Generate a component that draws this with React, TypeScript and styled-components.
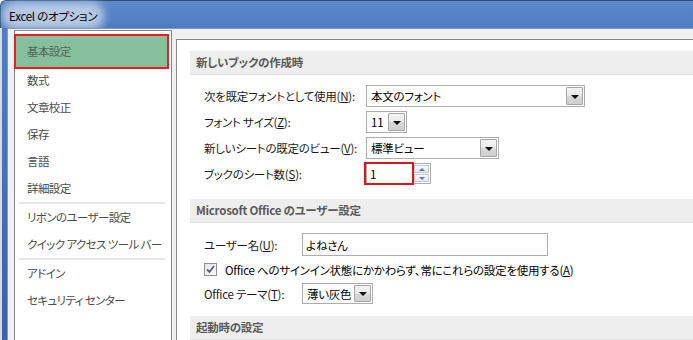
import React from 'react';
import styled, { createGlobalStyle } from 'styled-components';

const GlobalStyle = createGlobalStyle`
  html, body {
    margin: 0;
    padding: 0;
    background: #f0f0f0;
  }
  body {
    font-family: 'Noto Sans CJK JP', 'Noto Sans', sans-serif;
    font-size: 11.5px;
    letter-spacing: -0.25px;
    color: #000;
    font-feature-settings: 'palt';
  }
`;

const Window = styled.div`
  width: 693px;
  height: 340px;
  overflow: hidden;
  display: flex;
  flex-direction: column;
  background: #f0f0f0;
`;

const TitleBar = styled.div`
  height: 28px;
  flex-shrink: 0;
  display: flex;
  align-items: center;
  padding-left: 8px;
  box-sizing: border-box;
  border-top: 1px solid #2f4a70;
  border-left: 1px solid #2f4a70;
  border-top-left-radius: 6px;
  background: linear-gradient(to bottom, #5d8bcb 0%, #5282c5 60%, #4c7bbf 100%);
`;

const TitleText = styled.span`
  font-size: 11.5px;
  line-height: 14px;
  color: #000;
  background: rgba(214, 224, 238, 0.75);
  box-shadow: 0 0 9px 7px rgba(214, 224, 238, 0.75);
  border-radius: 6px;
  margin-top: 2px;
`;

const Frame = styled.div`
  flex: 1;
  display: flex;
  min-height: 0;
`;

const LeftEdge = styled.div`
  width: 5px;
  flex-shrink: 0;
  border-left: 2px solid #d6dbe3;
  background: linear-gradient(to bottom, #4f7fc2, #3a63a6);
`;

const Client = styled.div`
  flex: 1;
  display: flex;
  align-items: flex-start;
  gap: 4px;
  padding: 1px 0 0 6px;
  background: #f0f0f0;
  border-top: 1px solid #8a97a9;
  border-left: 1px solid #8a97a9;
  overflow: hidden;
`;

const Nav = styled.div`
  width: 158px;
  height: 320px;
  flex-shrink: 0;
  box-sizing: border-box;
  border: 1px solid #828790;
  background: #fff;
  padding-top: 3px;
`;

const NavItem = styled.div<{ $active?: boolean }>`
  height: 27px;
  line-height: 27px;
  padding-left: 12px;
  color: #4b4b4b;
  letter-spacing: -0.6px;
  white-space: nowrap;
  ${(p) =>
    p.$active &&
    `
    box-sizing: border-box;
    width: 155px;
    height: 35px;
    line-height: 31px;
    margin: 0 0 -2px -1px;
    padding-left: 11px;
    border: 2px solid #ee1d23;
    background: #86bf9c;
    color: #56665b;
  `}
`;

const NavSep = styled.div`
  height: 2px;
  margin: 0 6px 0 4px;
  background: #e6e6e6;
`;

const Content = styled.div`
  width: 560px;
  height: 320px;
  flex-shrink: 0;
  margin-top: 9px;
  box-sizing: border-box;
  border: 1px solid #828790;
  background: #fff;
  padding: 11px 0 0 13px;
`;

const SectionHeader = styled.div`
  height: 24px;
  box-sizing: border-box;
  line-height: 23px;
  padding-left: 6px;
  background: #eeeeee;
  border-bottom: 1px solid #e2e2e2;
  color: #5a5a5a;
  font-weight: 700;
  white-space: nowrap;
`;

const SectionBody = styled.div<{ $gap: number; $bottom: number }>`
  display: flex;
  flex-direction: column;
  gap: ${(p) => p.$gap}px;
  padding: 10px 0 ${(p) => p.$bottom}px 14px;
`;

const Row = styled.div`
  display: flex;
  align-items: center;
  min-height: 21px;
  white-space: nowrap;
`;

const Label = styled.div<{ $width: number }>`
  width: ${(p) => p.$width}px;
  flex-shrink: 0;
  color: #1a1a1a;
`;

const Select = styled.div<{ $width: number; $height?: number }>`
  width: ${(p) => p.$width}px;
  height: ${(p) => p.$height ?? 22}px;
  box-sizing: border-box;
  border: 1px solid #abadb3;
  background: #fff;
  display: flex;
  align-items: stretch;
  padding: 1px;
`;

const SelectValue = styled.div`
  flex: 1;
  padding-left: 3px;
  display: flex;
  align-items: center;
  overflow: hidden;
  white-space: nowrap;
`;

const DropButton = styled.div`
  width: 17px;
  flex-shrink: 0;
  box-sizing: border-box;
  border: 1px solid #a7a7a7;
  border-radius: 1px;
  background: linear-gradient(to bottom, #f4f4f4 0%, #e8e8e8 50%, #d9d9d9 51%, #cfcfcf 100%);
  display: flex;
  align-items: center;
  justify-content: center;
  &::after {
    content: '';
    width: 0;
    height: 0;
    margin-top: 1px;
    border-left: 4px solid transparent;
    border-right: 4px solid transparent;
    border-top: 4px solid #111;
  }
`;

const SpinBox = styled.div`
  width: 65px;
  height: 21px;
  box-sizing: border-box;
  border: 1px solid #abadb3;
  display: flex;
  background: #fff;
`;

const SpinValue = styled.div`
  flex: 1;
  padding-left: 4px;
  display: flex;
  align-items: center;
  outline: 2px solid #e0141b;
  outline-offset: 0px;
  margin: 0 2px 0 -1px;
`;

const SpinButtons = styled.div`
  width: 15px;
  display: flex;
  flex-direction: column;
  gap: 1px;
  padding: 1px 1px 1px 0;
`;

const SpinButton = styled.div<{ $down?: boolean }>`
  flex: 1;
  box-sizing: border-box;
  border: 1px solid #c5c9d0;
  background: linear-gradient(to bottom, #f7f8fa, #e4e7ec);
  display: flex;
  align-items: center;
  justify-content: center;
  &::after {
    content: '';
    width: 0;
    height: 0;
    border-left: 3px solid transparent;
    border-right: 3px solid transparent;
    ${(p) =>
      p.$down ? 'border-top: 3px solid #5d77ab;' : 'border-bottom: 3px solid #5d77ab;'}
  }
`;

const TextInput = styled.div<{ $width: number }>`
  width: ${(p) => p.$width}px;
  height: 23px;
  box-sizing: border-box;
  border: 1px solid #abadb3;
  padding-left: 3px;
  display: flex;
  align-items: center;
  background: #fff;
`;

const CheckRow = styled(Row)`
  gap: 8px;
  padding-left: 0;
`;

const CheckBox = styled.div`
  width: 13px;
  height: 13px;
  box-sizing: border-box;
  border: 1px solid #8e8f8f;
  background: linear-gradient(135deg, #e6e6e6, #fbfbfb);
  display: flex;
  align-items: center;
  justify-content: center;
`;

const Mn = styled.u`
  text-underline-offset: 1px;
`;

const navItems = ['数式', '文章校正', '保存', '言語', '詳細設定'];

const App: React.FC = () => {
  return (
    <Window>
      <GlobalStyle />
      <TitleBar>
        <TitleText>Excel のオプション</TitleText>
      </TitleBar>
      <Frame>
        <LeftEdge />
        <Client>
          <Nav>
            <NavItem $active>基本設定</NavItem>
            {navItems.map((t) => (
              <NavItem key={t}>{t}</NavItem>
            ))}
            <NavSep />
            <NavItem>リボンのユーザー設定</NavItem>
            <NavItem>クイック アクセス ツール バー</NavItem>
            <NavSep />
            <NavItem>アドイン</NavItem>
            <NavItem>セキュリティ センター</NavItem>
          </Nav>
          <Content>
            <SectionHeader>新しいブックの作成時</SectionHeader>
            <SectionBody $gap={4} $bottom={15}>
              <Row>
                <Label $width={162}>
                  次を既定フォントとして使用(<Mn>N</Mn>):
                </Label>
                <Select $width={219}>
                  <SelectValue>本文のフォント</SelectValue>
                  <DropButton />
                </Select>
              </Row>
              <Row>
                <Label $width={162}>
                  フォント サイズ(<Mn>Z</Mn>):
                </Label>
                <Select $width={41}>
                  <SelectValue>11</SelectValue>
                  <DropButton />
                </Select>
              </Row>
              <Row>
                <Label $width={162}>
                  新しいシートの既定のビュー(<Mn>V</Mn>):
                </Label>
                <Select $width={133}>
                  <SelectValue>標準ビュー</SelectValue>
                  <DropButton />
                </Select>
              </Row>
              <Row>
                <Label $width={162}>
                  ブックのシート数(<Mn>S</Mn>):
                </Label>
                <SpinBox>
                  <SpinValue>1</SpinValue>
                  <SpinButtons>
                    <SpinButton />
                    <SpinButton $down />
                  </SpinButtons>
                </SpinBox>
              </Row>
            </SectionBody>
            <SectionHeader>Microsoft Office のユーザー設定</SectionHeader>
            <SectionBody $gap={3} $bottom={12}>
              <Row>
                <Label $width={98}>
                  ユーザー名(<Mn>U</Mn>):
                </Label>
                <TextInput $width={246}>よねさん</TextInput>
              </Row>
              <CheckRow>
                <CheckBox>
                  <svg width="9" height="9" viewBox="0 0 9 9">
                    <path
                      d="M1 4.5 L3.5 7 L8 1"
                      fill="none"
                      stroke="#4a5e9a"
                      strokeWidth="1.8"
                    />
                  </svg>
                </CheckBox>
                <span>
                  Office へのサインイン状態にかかわらず、常にこれらの設定を使用する(<Mn>A</Mn>)
                </span>
              </CheckRow>
              <Row>
                <Label $width={98}>
                  Office テーマ(<Mn>T</Mn>):
                </Label>
                <Select $width={71} $height={21}>
                  <SelectValue>薄い灰色</SelectValue>
                  <DropButton />
                </Select>
              </Row>
            </SectionBody>
            <SectionHeader>起動時の設定</SectionHeader>
          </Content>
        </Client>
      </Frame>
    </Window>
  );
};

export default App;
